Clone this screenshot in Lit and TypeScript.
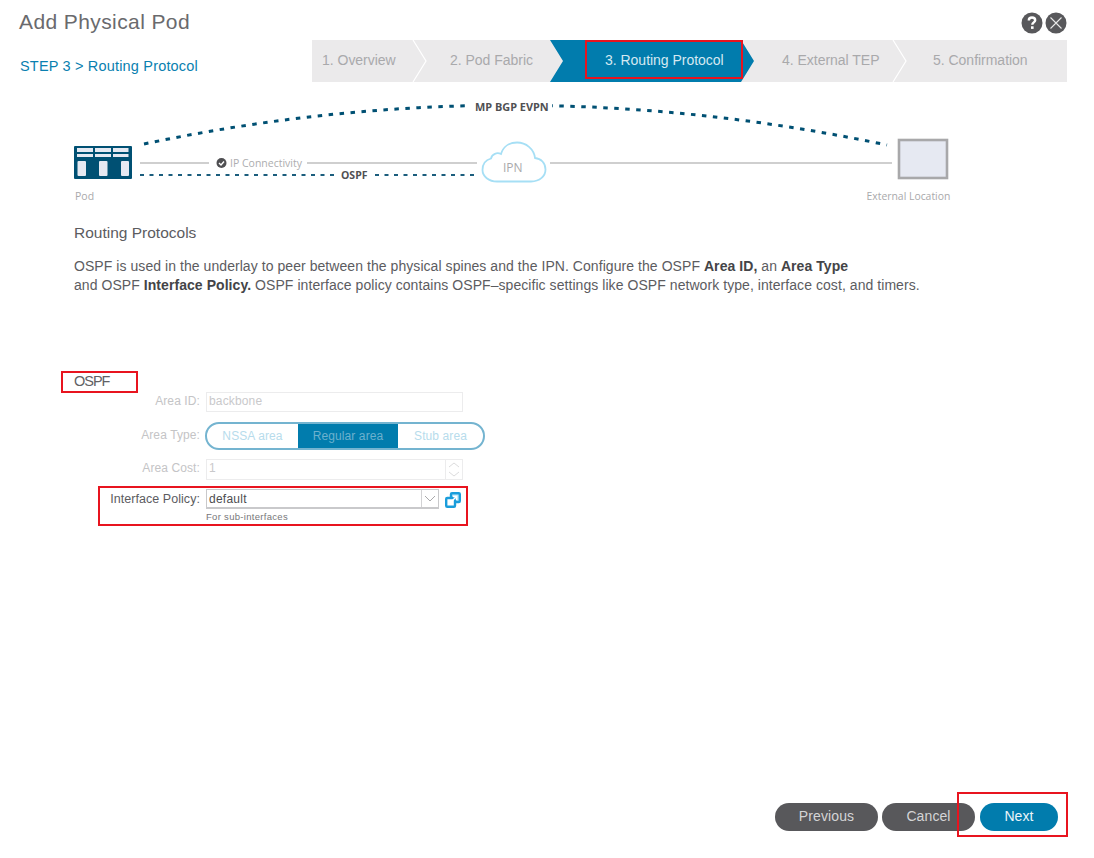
import { LitElement, html, css } from "lit";
import { customElement } from "lit/decorators.js";

const STEPS = [
  { label: "1. Overview", width: 100, pad: 10 },
  { label: "2. Pod Fabric", width: 138, pad: 38 },
  { label: "3. Routing Protocol", width: 191, pad: 55, active: true },
  { label: "4. External TEP", width: 151, pad: 41 },
  { label: "5. Confirmation", width: 175, pad: 41 },
];

@customElement("app-root")
export class AppRoot extends LitElement {
  static styles = css`
    :host {
      display: flex;
      flex-direction: column;
      position: relative;
      width: 1094px;
      height: 858px;
      background: #fff;
      overflow: hidden;
      font-family: "Liberation Sans", Arial, sans-serif;
      color: #58585b;
    }
    .top {
      display: flex;
      justify-content: space-between;
      align-items: center;
      height: 44px;
      padding: 0 27px 0 19px;
      box-sizing: border-box;
    }
    .title {
      font-size: 21px;
      color: #6a6a6d;
      letter-spacing: 0.4px;
      margin-top: -1px;
    }
    .round-icons {
      display: flex;
      gap: 2px;
      margin-top: 2px;
    }
    .round-icons svg { display: block; }
    .wizard {
      display: flex;
      align-items: center;
      justify-content: space-between;
      height: 42px;
      margin-top: -4px;
      padding: 0 27px 0 20px;
    }
    .crumb {
      font-size: 14.5px;
      color: #0a7fb0;
      margin-top: 9px;
      letter-spacing: 0.18px;
    }
    .stepper {
      display: flex;
      position: relative;
      width: 755px;
      height: 42px;
      background: #ebeaeb;
    }
    .step {
      flex: none;
      display: flex;
      align-items: center;
      box-sizing: border-box;
      font-size: 14px;
      color: #a9a9ab;
      letter-spacing: -0.02px;
      white-space: nowrap;
      padding-bottom: 2px;
    }
    .step.active {
      position: relative;
      color: #d5e9f2;
      background: #017cad;
    }
    .active-wrap {
      flex: none;
      position: relative;
      display: flex;
    }
    .mark {
      position: absolute;
      left: 35px;
      top: 0;
      bottom: 3px;
      border: 2px solid #e8141f;
      pointer-events: none;
    }
    .sep {
      position: absolute;
      top: 0;
      display: block;
    }
    .diagram {
      display: block;
      margin: 13px 0 0 60px;
    }
    .diagram text { font-family: "Open Sans", "Liberation Sans", sans-serif; }
    .intro {
      margin: 13px 0 0 74px;
    }
    .intro h2 {
      margin: 0;
      font-size: 15.5px;
      font-weight: 400;
      color: #5c5c5f;
      line-height: 20px;
    }
    .intro p {
      margin: 14px 0 0;
      font-size: 14px;
      line-height: 19px;
      color: #5c5c5f;
      letter-spacing: 0.06px;
      white-space: nowrap;
    }
    .intro b { color: #444447; }
    .form {
      display: flex;
      flex-direction: column;
      align-items: flex-start;
      margin: 76px 0 0 61px;
    }
    .section {
      width: 77px;
      height: 22px;
      box-sizing: border-box;
      border: 2px solid #e8141f;
      padding-left: 11px;
      font-size: 14.5px;
      line-height: 16px;
      color: #616164;
      letter-spacing: -1px;
    }
    .row {
      display: grid;
      grid-template-columns: 139px auto;
      column-gap: 6px;
      align-items: center;
    }
    .row label {
      text-align: right;
      font-size: 12px;
      color: #c4c4c6;
      letter-spacing: 0.1px;
      margin-top: -3px;
    }
    .field {
      box-sizing: border-box;
      height: 20px;
      width: 257px;
      border: 1px solid #ececed;
      display: flex;
      align-items: center;
      padding: 0 0 2px 2px;
      font-size: 12px;
      color: #c9c9cb;
      letter-spacing: 0.15px;
    }
    .r1 { margin-top: -1px; }
    .r2 { margin-top: 10px; }
    .r3 { margin-top: 9px; }
    .cost { justify-content: space-between; padding-bottom: 0; height: 21px; }
    .cost span { margin-top: -3px; }
    .spin {
      width: 16px;
      height: 100%;
      border-left: 1px solid #ececed;
      display: block;
    }
    .seg {
      display: flex;
      width: 280px;
      height: 28px;
      box-sizing: border-box;
      border: 2px solid #74b4d0;
      border-radius: 14px;
      overflow: hidden;
      font-size: 12px;
      letter-spacing: 0.1px;
      color: #b7dcec;
      margin-left: -1px;
    }
    .seg span {
      display: flex;
      align-items: center;
      justify-content: center;
    }
    .seg .s1 { width: 91px; }
    .seg .s2 { width: 100px; background: #017cad; color: #6cb1ce; }
    .seg .s3 { flex: 1; }
    .policy {
      margin: 6px 0 0 37px;
      width: 370px;
      height: 40px;
      box-sizing: border-box;
      border: 2px solid #e8141f;
      display: grid;
      grid-template-columns: 100px auto;
      column-gap: 6px;
      align-content: start;
      padding-top: 1px;
    }
    .policy label {
      text-align: right;
      font-size: 12.5px;
      color: #5c5c5f;
      letter-spacing: 0.05px;
      line-height: 20px;
    }
    .policy-main { display: flex; align-items: center; }
    .select {
      box-sizing: border-box;
      width: 233px;
      height: 20px;
      border: 1px solid #c9c9cb;
      border-bottom-width: 2px;
      display: flex;
      align-items: center;
      justify-content: space-between;
      padding-left: 2px;
      font-size: 12px;
      color: #4d4d50;
      letter-spacing: 0.25px;
    }
    .select .arrow {
      display: block;
      width: 16px;
      height: 100%;
      border-left: 1px solid #d2d2d4;
    }
    .open { display: block; margin: 2px 0 0 6px; }
    .hint {
      grid-column: 2;
      font-size: 9.5px;
      line-height: 11px;
      color: #77777a;
      margin-top: 2px;
      letter-spacing: 0.3px;
    }
    .footer {
      display: flex;
      justify-content: flex-end;
      align-items: flex-end;
      gap: 4px;
      margin-top: auto;
      margin-bottom: 21px;
      margin-right: 26px;
    }
    .btn {
      height: 28px;
      box-sizing: border-box;
      padding-bottom: 2px;
      border-radius: 14px;
      background: #58585b;
      color: #d4d4d6;
      font-size: 14px;
      display: flex;
      align-items: center;
      justify-content: center;
      letter-spacing: 0.1px;
      margin-bottom: 6px;
    }
    .prev { width: 103px; }
    .cancel { width: 93px; }
    .next-box {
      width: 111px;
      height: 45px;
      box-sizing: border-box;
      border: 2px solid #e8141f;
      margin-left: -22px;
      display: flex;
      align-items: flex-end;
      padding: 0 0 4px 21px;
      position: relative;
    }
    .next {
      width: 78px;
      background: #017cad;
      color: #ecf5f9;
      flex: none;
      margin-bottom: 0;
    }
  `;

  private sep(left: number) {
    return html`<svg class="sep" style="left:${left}px" width="15" height="42" viewBox="0 0 15 42">
      <path d="M1 0 L14 21 L1 42" fill="none" stroke="#fff" stroke-width="1.2" />
    </svg>`;
  }

  private diagram() {
    return html`<svg class="diagram" width="900" height="115" viewBox="60 95 900 115">
      <path d="M144 144 Q512 66 887 145" fill="none" stroke="#005073" stroke-width="3" stroke-dasharray="4.500 6.500" />
      <rect x="466" y="98" width="86" height="18" fill="#fff" />
      <text x="475" y="111" font-size="10.9" font-weight="700" fill="#505053">MP BGP EVPN</text>

      <rect x="74" y="146" width="58" height="33" rx="1" fill="#005073" />
      <path d="M77 148h16v4H77zM95 148h16v4H95zM113 148h15.500v4H113zM77 154h16v3H77zM95 154h16v3H95zM113 154h15.500v3H113z" fill="#e6e9f2" />
      <rect x="77.500" y="161" width="8.500" height="15" rx="1" fill="#e6e9f2" />
      <rect x="99" y="161" width="8.500" height="15" rx="1" fill="#e6e9f2" />
      <rect x="121" y="161" width="8" height="15" rx="1" fill="#e6e9f2" />

      <path d="M140 163H209M307 163H477M550 163H892" stroke="#cfcfcf" stroke-width="2" fill="none" />
      <circle cx="221.500" cy="163" r="5" fill="#4f4f52" />
      <path d="M219 163l2 2 3-3.500" fill="none" stroke="#fff" stroke-width="1.400" />
      <text x="230" y="167" font-size="10.500" fill="#adadaf">IP Connectivity</text>

      <path d="M140 175H336M375 175H478" stroke="#1b5d7d" stroke-width="2" stroke-dasharray="4 5.500" fill="none" />
      <text x="341" y="178.500" font-size="10.500" font-weight="700" fill="#505053">OSPF</text>

      <path d="M497 181.500H531C540 181.500 545.500 176 545.500 169.500C545.500 163 541 158.500 535 158C534 149 526 142.500 517 142.500C509 142.500 503 147 501 154C497 152 492 154 491 158.500C485.500 160 482.500 164.500 482.500 170C482.500 176.500 489 181.500 497 181.500Z" fill="#fff" stroke="#a6dff5" stroke-width="1.800" />
      <text x="503" y="172" font-size="12" fill="#a9a9ab">IPN</text>

      <rect x="899" y="140" width="48" height="38" fill="#e6e9f2" stroke="#a8a8aa" stroke-width="2.600" />
      <text x="75" y="200" font-size="10.500" fill="#a9a9ab">Pod</text>
      <text x="866.500" y="200" font-size="10.400" fill="#a9a9ab">External Location</text>
    </svg>`;
  }

  render() {
    return html`
      <div class="top">
        <div class="title">Add Physical Pod</div>
        <div class="round-icons">
          <svg width="22" height="22" viewBox="0 0 22 22">
            <circle cx="11" cy="11" r="10.500" fill="#58585b" />
            <path d="M7.800 8.500C7.800 6.500 9.200 5.500 11 5.500C12.900 5.500 14.200 6.600 14.200 8.300C14.200 10.300 11.300 10.500 11.300 12.700" fill="none" stroke="#fff" stroke-width="2.400" />
            <rect x="10" y="14.300" width="2.600" height="2.600" fill="#fff" />
          </svg>
          <svg width="22" height="22" viewBox="0 0 22 22">
            <circle cx="11" cy="11" r="10.500" fill="#58585b" />
            <path d="M5.500 5.500L16.500 16.500M16.500 5.500L5.500 16.500" stroke="#e8e8e8" stroke-width="1.100" />
          </svg>
        </div>
      </div>

      <div class="wizard">
        <div class="crumb">STEP 3 &gt; Routing Protocol</div>
        <div class="stepper">
          ${STEPS.map((s) =>
            s.active
              ? html`<div class="active-wrap">
                  <div class="step active" style="width:${s.width + 13}px;margin-right:-13px;padding-left:${s.pad}px;clip-path:polygon(0 0, ${s.width}px 0, 100% 50%, ${s.width}px 100%, 0 100%, 13px 50%)">${s.label}</div>
                  <span class="mark" style="width:${s.width - 35 - 2}px"></span>
                </div>`
              : html`<div class="step" style="width:${s.width}px;padding-left:${s.pad}px">${s.label}</div>`
          )}
          ${this.sep(100)} ${this.sep(580)}
        </div>
      </div>

      ${this.diagram()}

      <div class="intro">
        <h2>Routing Protocols</h2>
        <p>OSPF is used in the underlay to peer between the physical spines and the IPN. Configure the OSPF <b>Area ID,</b> an <b>Area Type</b><br />and OSPF <b>Interface Policy.</b> OSPF interface policy contains OSPF–specific settings like OSPF network type, interface cost, and timers.</p>
      </div>

      <div class="form">
        <div class="section">OSPF</div>
        <div class="row r1">
          <label>Area ID:</label>
          <div class="field">backbone</div>
        </div>
        <div class="row r2">
          <label>Area Type:</label>
          <div class="seg">
            <span class="s1">NSSA area</span>
            <span class="s2">Regular area</span>
            <span class="s3">Stub area</span>
          </div>
        </div>
        <div class="row r3">
          <label>Area Cost:</label>
          <div class="field cost">
            <span>1</span>
            <svg class="spin" viewBox="0 0 16 19">
              <path d="M3 7L8 3L13 7M3 12L8 16L13 12" fill="none" stroke="#dcdcdd" stroke-width="1" />
            </svg>
          </div>
        </div>
        <div class="policy">
          <label>Interface Policy:</label>
          <div class="policy-main">
            <div class="select">
              default
              <svg class="arrow" viewBox="0 0 16 17">
                <path d="M3 6L8 11L13 6" fill="none" stroke="#a9a9ab" stroke-width="1" />
              </svg>
            </div>
            <svg class="open" width="16" height="16" viewBox="0 0 16 16">
              <rect x="6" y="1.200" width="8.800" height="8.800" rx="1" fill="#bfe6f8" stroke="#1a9ddb" stroke-width="2.400" />
              <rect x="1.200" y="6" width="8.800" height="8.800" rx="1" fill="#fff" stroke="#1a9ddb" stroke-width="2.400" />
              <path d="M6 10L11 5M8 4.500H11.500V8" fill="none" stroke="#fff" stroke-width="1.400" />
            </svg>
          </div>
          <div class="hint">For sub-interfaces</div>
        </div>
      </div>

      <div class="footer">
        <div class="btn prev">Previous</div>
        <div class="btn cancel">Cancel</div>
        <div class="next-box"><div class="btn next">Next</div></div>
      </div>
    `;
  }
}
